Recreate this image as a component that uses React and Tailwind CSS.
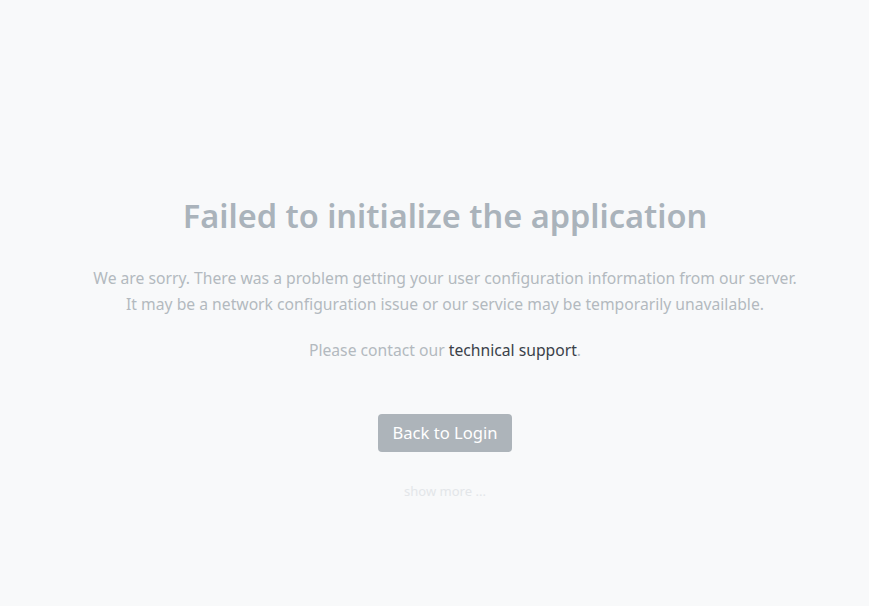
export default function App() {
  return (
    <div className="w-full h-[606px] bg-[#f8f9fa] flex flex-col items-center text-center pl-[21px]" style={{ fontFamily: '"Segoe UI", "Noto Sans", sans-serif' }}>
      <h1 className="mt-[193px] text-[32.5px] leading-[46px] font-semibold text-[#aab3bb]">Failed to initialize the application</h1>
      <p className="mt-[26px] text-[15.7px] leading-[26px] text-[#b3b9bf]">
        We are sorry. There was a problem getting your user configuration information from our server.
        <br />
        It may be a network configuration issue or our service may be temporarily unavailable.
      </p>
      <p className="mt-[20px] text-[15.7px] leading-[26px] text-[#b3b9bf]">
        Please contact our <a className="text-[#3a4149]">technical support</a>.
      </p>
      <button className="mt-[51px] h-[38px] px-[14px] rounded-[4px] bg-[#adb4ba] text-white text-[16.6px] leading-[24px]">Back to Login</button>
      <div className="mt-[30px] text-[13px] leading-[18px] text-[#e3e6e9]">show more ...</div>
    </div>
  );
}
